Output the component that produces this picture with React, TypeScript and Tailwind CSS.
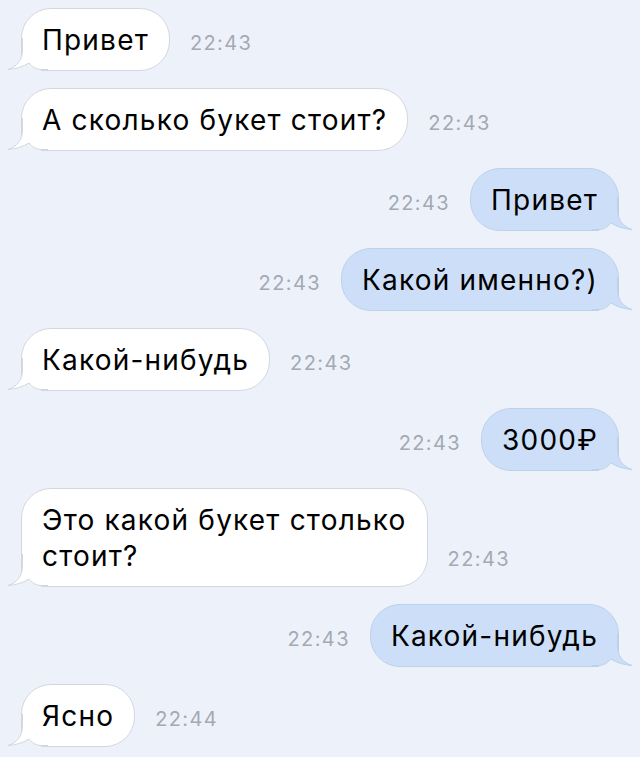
import type { ReactNode } from "react";

type Msg = { out: boolean; text: ReactNode; time: string };

const messages: Msg[] = [
  { out: false, text: "Привет", time: "22:43" },
  { out: false, text: "А сколько букет стоит?", time: "22:43" },
  { out: true, text: "Привет", time: "22:43" },
  { out: true, text: "Какой именно?)", time: "22:43" },
  { out: false, text: "Какой-нибудь", time: "22:43" },
  { out: true, text: "3000₽", time: "22:43" },
  {
    out: false,
    text: (
      <>
        Это какой букет столько
        <br />
        стоит?
      </>
    ),
    time: "22:43",
  },
  { out: true, text: "Какой-нибудь", time: "22:43" },
  { out: false, text: "Ясно", time: "22:44" },
];

const BG = "#edf2fa";

function Tail({ out }: { out: boolean }) {
  const fill = out ? "#cddff8" : "#ffffff";
  const stroke = out ? "#bdd0ec" : "#d3d8e0";
  return (
    <svg
      width="42"
      height="34"
      viewBox="0 0 42 34"
      className={
        out
          ? "absolute -right-[16px] -bottom-[2px] -scale-x-100"
          : "absolute -left-[16px] -bottom-[2px]"
      }
    >
      <rect x="0" y="18" width="35" height="16" fill={BG} />
      <path
        d="M16.5 0 V12 C16.5 22 11 28.5 2 31.5 C9 31 17 29 23 25 C26 28.5 30 31 35 31 L42 31 L42 0 Z"
        fill={fill}
      />
      <path
        d="M16.5 0 V12 C16.5 22 11 28.5 2 31.5 C9 31 17 29 23 25 C26 28.5 30 31.5 35 31.5 L42 31.5"
        fill="none"
        stroke={stroke}
        strokeWidth="1"
      />
    </svg>
  );
}

function Bubble({ msg }: { msg: Msg }) {
  const time = (
    <span className="mb-[18px] text-[20px] leading-[20px] tracking-[1.4px] text-[#a4a9b2]">
      {msg.time}
    </span>
  );
  const bubble = (
    <div
      className={
        msg.out
          ? "relative rounded-[30px] rounded-br-none border border-[#bdd0ec] bg-[#cddff8] px-[20px] py-[12.5px] text-[28px] leading-[36px] tracking-[1.2px] text-black"
          : "relative rounded-[30px] rounded-bl-none border border-[#d3d8e0] bg-white px-[20px] py-[12.5px] text-[28px] leading-[36px] tracking-[1.2px] text-black"
      }
    >
      <span className="relative z-10">{msg.text}</span>
      <Tail out={msg.out} />
    </div>
  );
  return (
    <div
      className={
        msg.out
          ? "flex items-end justify-end gap-[20px] pr-[21px]"
          : "flex items-end justify-start gap-[20px] pl-[21px]"
      }
    >
      {msg.out ? (
        <>
          {time}
          {bubble}
        </>
      ) : (
        <>
          {bubble}
          {time}
        </>
      )}
    </div>
  );
}

export default function App() {
  return (
    <div
      className="flex min-h-[757px] w-[640px] flex-col gap-[17px] overflow-hidden bg-[#edf2fa] pt-[8px]"
      style={{ fontFamily: "Inter, 'Liberation Sans', sans-serif" }}
    >
      {messages.map((m, i) => (
        <Bubble key={i} msg={m} />
      ))}
    </div>
  );
}
